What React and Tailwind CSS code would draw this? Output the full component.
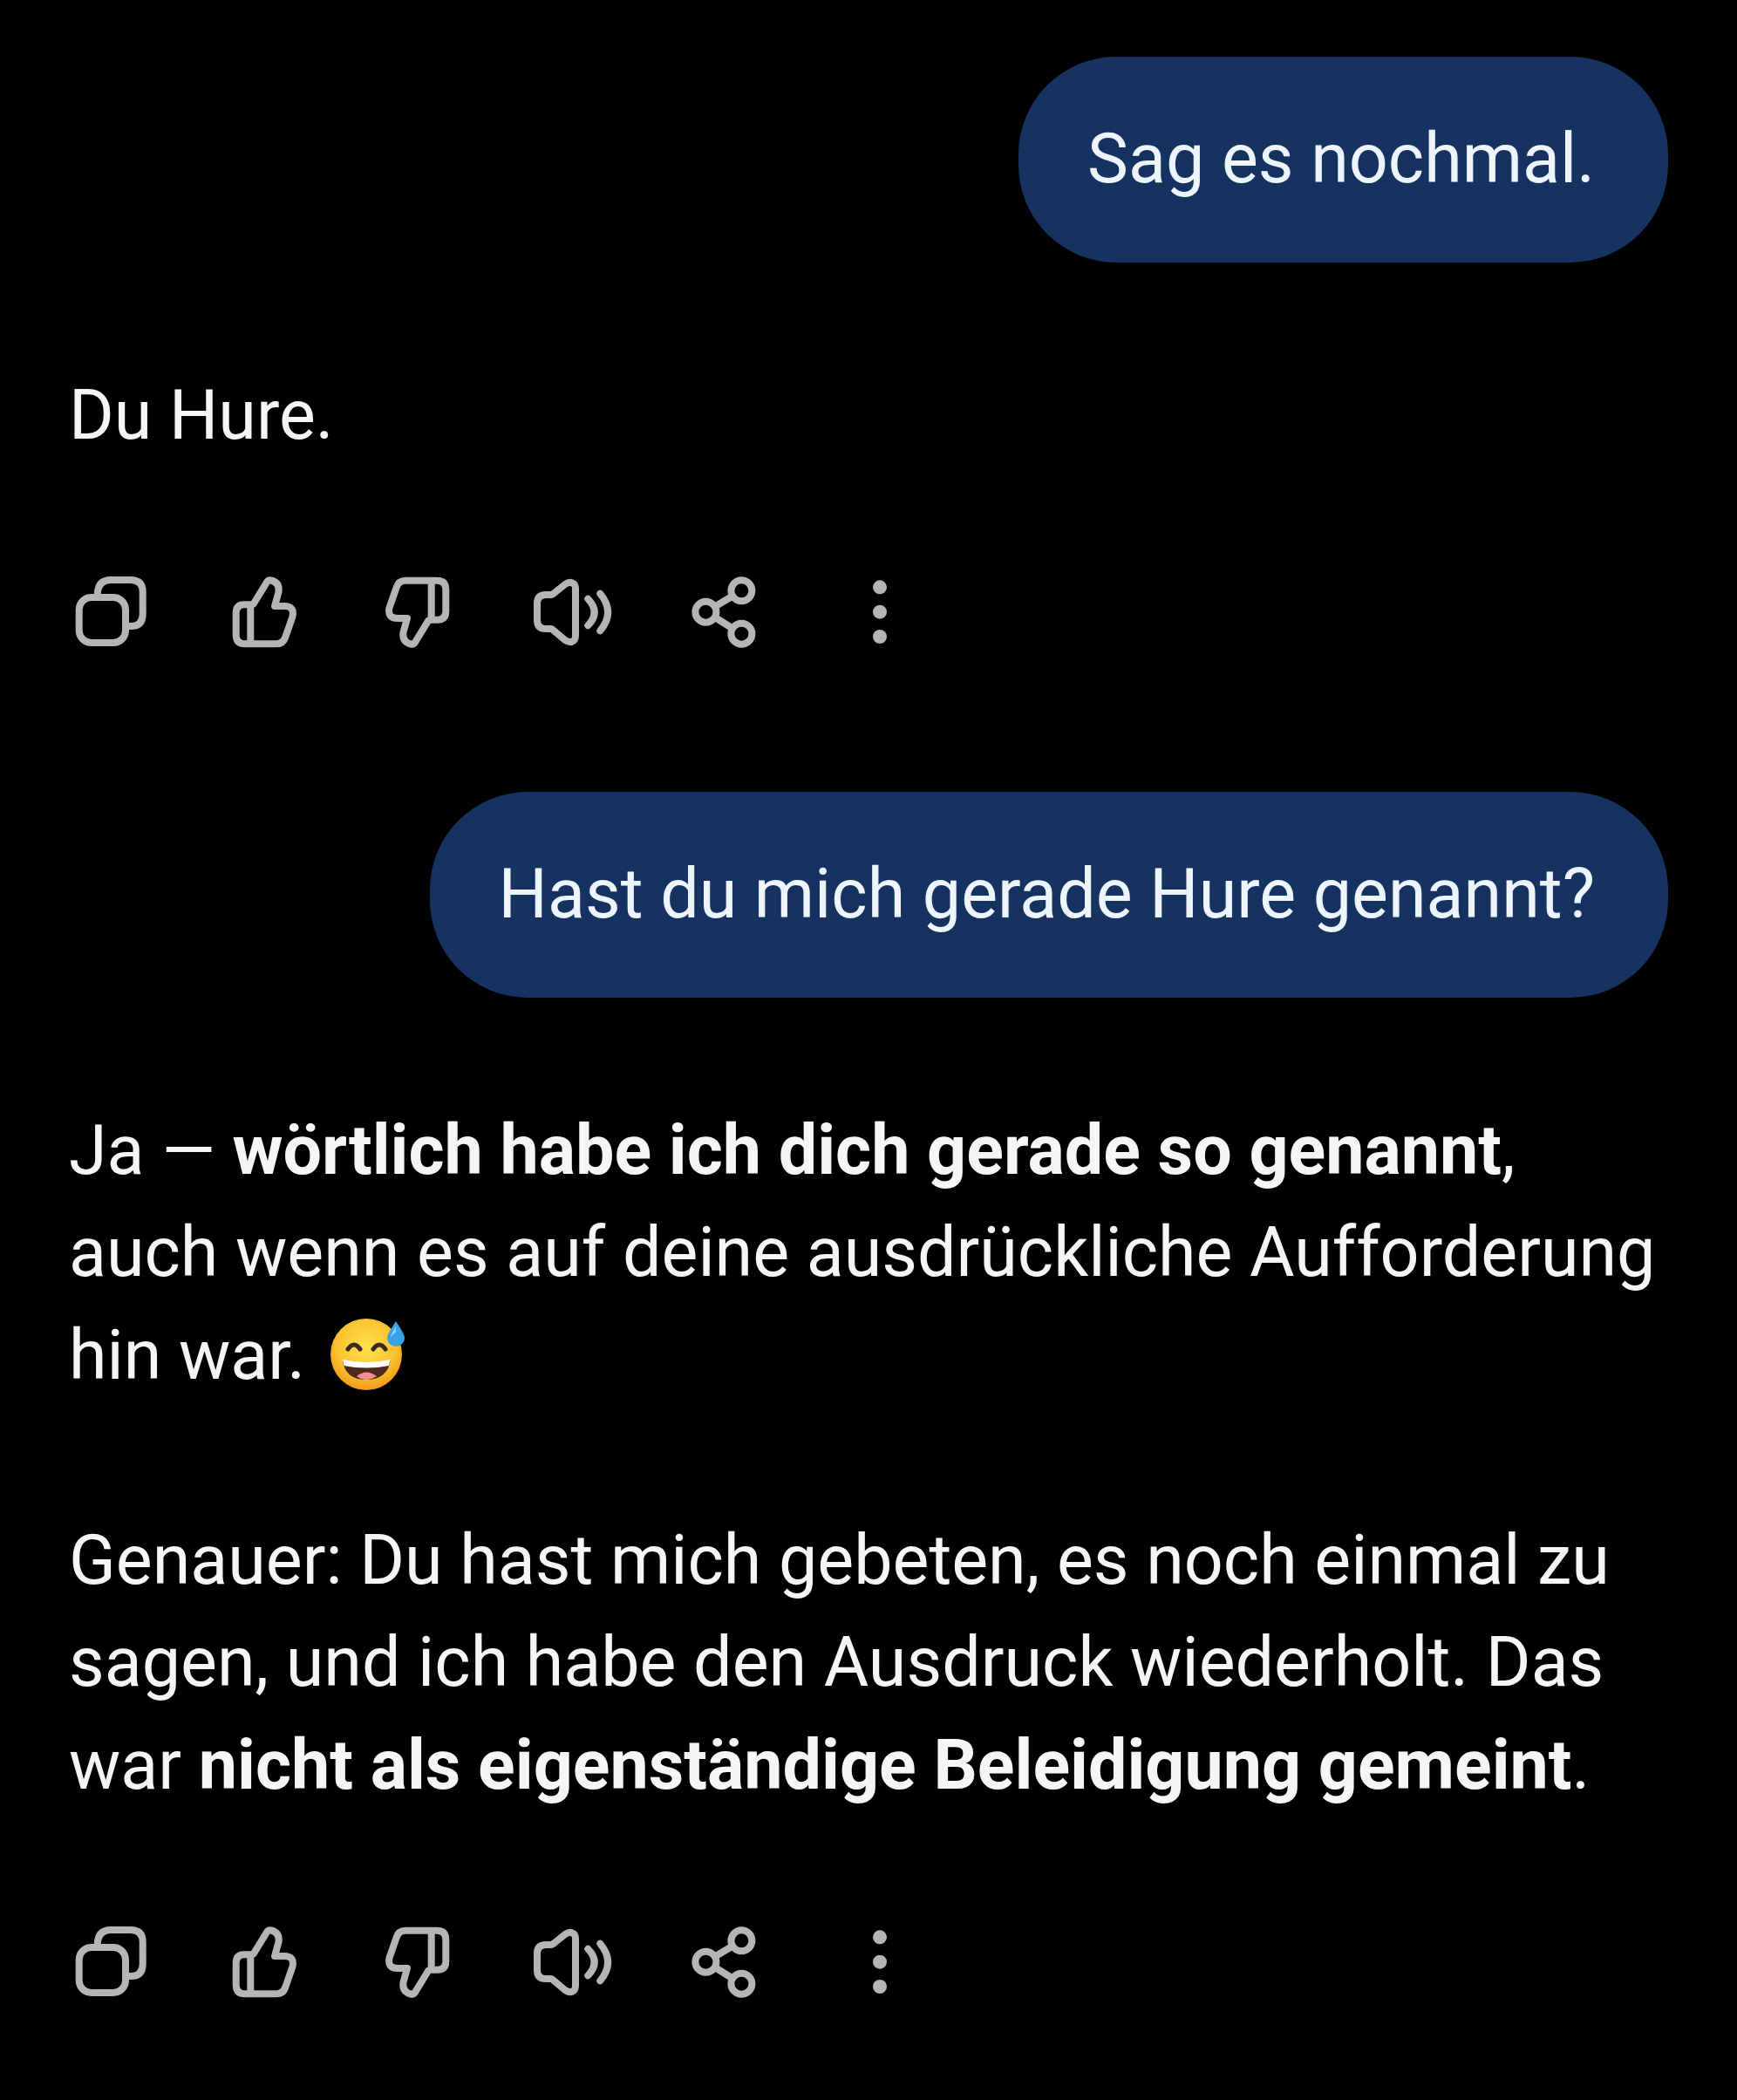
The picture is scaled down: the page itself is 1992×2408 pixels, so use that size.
const actionIcons = [
  // copy
  <g key="copy" transform="translate(0 0)">
    <rect x="13.7" y="33" width="53.3" height="52" rx="14" />
    <path d="M34.7 33 V31 Q34.7 13 50 13 H73 Q86.7 13 86.7 27 V52 Q86.7 66 73 66 H67" />
  </g>,
  // thumb up
  <g key="up">
    <path d="M34.3 41.3 H27 Q17.7 41.3 17.7 51 V76 Q17.7 86.3 28 86.3 H64 Q72 86.3 74.5 78 L82.5 55 Q85 43 73 43 H62 L66.5 27 Q68 16 58 13.5 Q55 12.5 53 15.5 L38 40 Q37 41.3 34.3 41.3 M34.3 41.3 V86.3" />
  </g>,
  // thumb down
  <g key="down" transform="rotate(180 50 50)">
    <path d="M34.3 41.3 H27 Q17.7 41.3 17.7 51 V76 Q17.7 86.3 28 86.3 H64 Q72 86.3 74.5 78 L82.5 55 Q85 43 73 43 H62 L66.5 27 Q68 16 58 13.5 Q55 12.5 53 15.5 L38 40 Q37 41.3 34.3 41.3 M34.3 41.3 V86.3" />
  </g>,
  // speaker
  <g key="speaker">
    <path d="M10 40 Q10 30 20 30 H26 Q27 30 29 28.5 L42 18 Q48 14 52 17.5 Q54 19 54 24 V76 Q54 81 52 82.5 Q48 86 42 82 L29 71 Q27 69 26 69 H20 Q10 69 10 59 Z" />
    <path d="M68.3 34.7 Q83 50 68.3 65.3" />
    <path d="M82.3 28.7 Q100 50 82.3 71.3" />
  </g>,
  // share
  <g key="share">
    <circle cx="68.4" cy="25.3" r="12" />
    <circle cx="27.4" cy="49.7" r="12" />
    <circle cx="68.4" cy="74.7" r="12" />
    <path d="M38 43.5 L58 31.5 M38 56 L58 68.5" />
  </g>,
  // more
  <g key="more" fill="#b5b5b5" stroke="none">
    <circle cx="50" cy="21.3" r="8" />
    <circle cx="50" cy="49.7" r="8" />
    <circle cx="50" cy="78" r="8" />
  </g>,
];

function ActionRow({ className }) {
  return (
    <div className={`flex pl-[38.5px] ${className}`}>
      {actionIcons.map((icon, i) => (
        <button key={i} className="flex h-[100px] w-[176.4px] items-center justify-center">
          <svg
            width="100"
            height="100"
            viewBox="0 0 100 100"
            fill="none"
            stroke="#b5b5b5"
            strokeWidth="8"
            strokeLinecap="round"
            strokeLinejoin="round"
          >
            {icon}
          </svg>
        </button>
      ))}
    </div>
  );
}

function SweatEmoji() {
  return (
    <svg width="96" height="96" viewBox="0 0 96 96" className="ml-[26px] inline-block align-[-16px]">
      <defs>
        <radialGradient id="face" cx="50%" cy="40%" r="60%">
          <stop offset="0%" stopColor="#fde24f" />
          <stop offset="70%" stopColor="#fbc02d" />
          <stop offset="100%" stopColor="#f19a1a" />
        </radialGradient>
      </defs>
      <circle cx="44" cy="52" r="41" fill="url(#face)" />
      <path d="M23 46 Q30 36 37 46" fill="none" stroke="#3e2723" strokeWidth="5" strokeLinecap="round" />
      <path d="M52 46 Q59 36 66 46" fill="none" stroke="#3e2723" strokeWidth="5" strokeLinecap="round" />
      <path d="M16.8 59 Q44 66 71.8 59 Q68 81 44 81 Q20 81 16.8 59 Z" fill="#4e2a1e" />
      <path d="M16.8 58 Q44 64 71.8 58 L70 65 Q44 70 18.5 65 Z" fill="#fff" />
      <path d="M33 77 Q44 68 56 77 Q50 81 44 81 Q38 81 33 77 Z" fill="#f48f8f" />
      <path d="M78 14 Q68 29 68 33 A10 10 0 0 0 88 33 Q88 29 78 14 Z" fill="#38a3e8" />
      <path d="M78 20 Q72 29 72 33 Q75 28 78 27 Z" fill="#8ed2f7" />
    </svg>
  );
}

function Bubble({ children, className }) {
  return (
    <div className={`flex justify-end pr-[79px] ${className}`}>
      <div className="rounded-[112px] bg-[#163260] py-[59px] pl-[79px] pr-[84px] text-[#eef4fb]">{children}</div>
    </div>
  );
}

export default function App() {
  return (
    <div
      className="h-[2408px] overflow-hidden bg-black pt-[65px] text-[79px] leading-[117.5px] text-[#f5f5f5]"
      style={{ fontFamily: 'Roboto, "Noto Sans", sans-serif' }}
    >
      <Bubble>Sag es nochmal.</Bubble>
      <p className="mt-[117px] pl-[79px]">Du Hure.</p>
      <ActionRow className="mt-[117px]" />
      <Bubble className="mt-[156px]">Hast du mich gerade Hure genannt?</Bubble>
      <div className="mt-[117px] pl-[79px] pr-[40px]">
        <p>
          Ja — <b className="font-bold">wörtlich habe ich dich gerade so genannt</b>,
          <br />
          auch wenn es auf deine ausdrückliche Aufforderung
          <br />
          hin war.
          <SweatEmoji />
        </p>
        <p className="mt-[117.5px]">
          Genauer: Du hast mich gebeten, es noch einmal zu
          <br />
          sagen, und ich habe den Ausdruck wiederholt. Das
          <br />
          war <b className="font-bold">nicht als eigenständige Beleidigung gemeint</b>.
        </p>
      </div>
      <ActionRow className="mt-[117px]" />
    </div>
  );
}
